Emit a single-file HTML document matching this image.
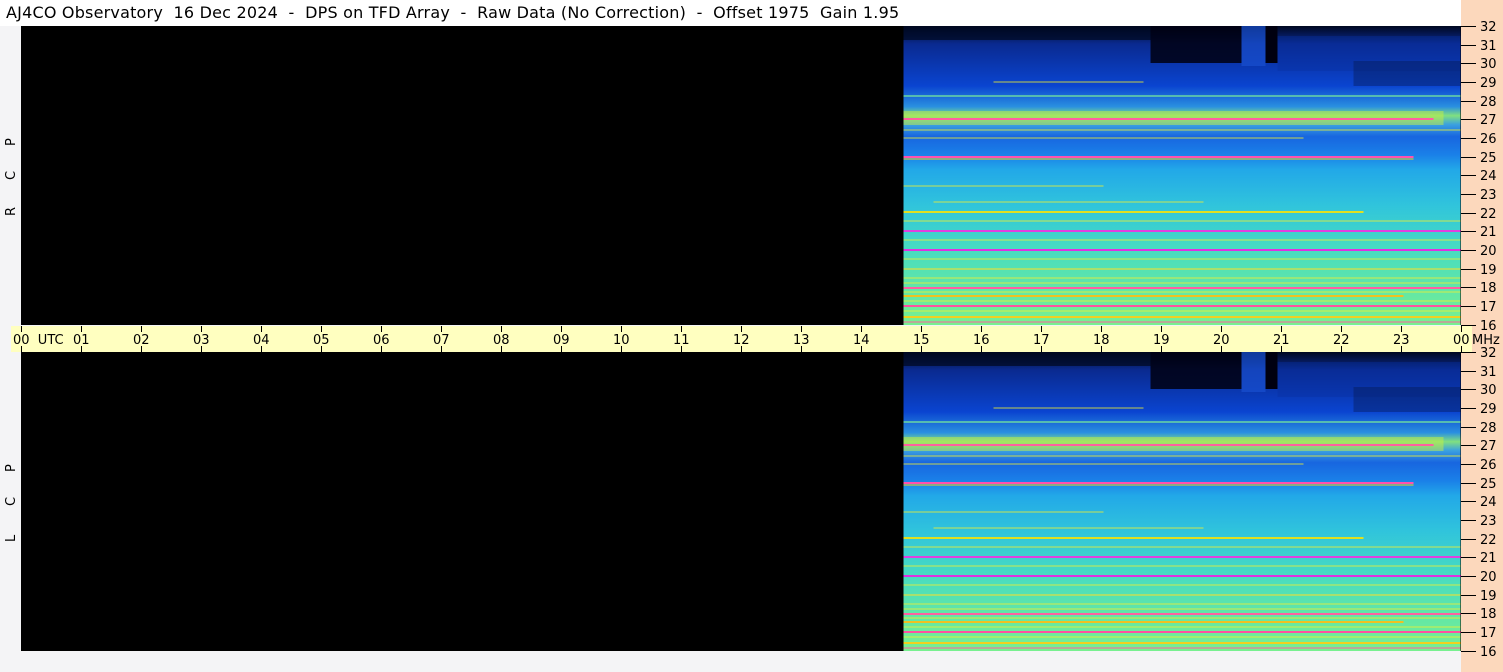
<!DOCTYPE html>
<html><head><meta charset="utf-8"><style>
html,body{margin:0;padding:0}
body{width:1503px;height:672px;position:relative;background:#f4f4f6;overflow:hidden;font-family:"DejaVu Sans",sans-serif}
.title{position:absolute;left:0;top:0;width:1461px;height:26px;background:#fff;font-size:16px;letter-spacing:0.2px;line-height:26px;padding-left:6px;box-sizing:border-box;color:#000;white-space:pre}
.right{position:absolute;left:1461px;top:0;width:42px;height:672px;background:#fcd8bc}
.panel{position:absolute;left:21px;width:1440px;height:299px;background:#000}
.bar{position:absolute;left:11px;top:326px;width:1461px;height:26px;background:#ffffc0}
</style></head><body>
<div class="title">AJ4CO Observatory  16 Dec 2024  -  DPS on TFD Array  -  Raw Data (No Correction)  -  Offset 1975  Gain 1.95</div>
<div class="right"></div>
<svg width="0" height="0" style="position:absolute">
<defs>
<linearGradient id="bg" x1="0" y1="0" x2="0" y2="1">
<stop offset="0" stop-color="#000820"/><stop offset="0.06" stop-color="#0a2a90"/>
<stop offset="0.2" stop-color="#0a44d0"/><stop offset="0.27" stop-color="#2a90e0"/>
<stop offset="0.3" stop-color="#80e080"/><stop offset="0.33" stop-color="#3aa0e0"/>
<stop offset="0.37" stop-color="#1866e0"/><stop offset="0.43" stop-color="#1a80e8"/>
<stop offset="0.48" stop-color="#22a8e8"/><stop offset="0.6" stop-color="#30c4dc"/>
<stop offset="0.75" stop-color="#48dcc0"/><stop offset="1" stop-color="#78f090"/>
</linearGradient>
<symbol id="spec" viewBox="0 0 557 299">
<rect width="557" height="299" fill="url(#bg)"/>
<rect x="247" y="0" width="91" height="37" fill="#000010" opacity="0.85"/>
<rect x="362" y="0" width="12" height="37" fill="#000010"/>
<rect x="338" y="0" width="24" height="40" fill="#1850d0" opacity="0.7"/>
<rect x="374" y="10" width="183" height="35" fill="#0830a0" opacity="0.4"/>
<rect x="450" y="35" width="107" height="25" fill="#041850" opacity="0.4"/>
<rect x="0" y="0" width="247" height="14" fill="#000820" opacity="0.7"/>
<rect x="0" y="85" width="540" height="14" fill="#c8f040" opacity="0.5"/>
<g stroke-width="2">
<line x1="0" y1="93" x2="530" y2="93" stroke="#ff60a0"/>
<line x1="0" y1="70" x2="557" y2="70" stroke="#70e0a0" opacity="0.7"/>
<line x1="0" y1="131" x2="510" y2="131" stroke="#ff50b0"/>
<line x1="0" y1="133" x2="510" y2="133" stroke="#f0d020" stroke-width="1"/>
<line x1="0" y1="186" x2="460" y2="186" stroke="#e0e020"/>
<line x1="0" y1="205" x2="557" y2="205" stroke="#e040e0"/>
<line x1="0" y1="224" x2="557" y2="224" stroke="#e030e0"/>
<line x1="0" y1="243" x2="557" y2="243" stroke="#e0e040" opacity="0.6"/>
<line x1="0" y1="262" x2="557" y2="262" stroke="#ff60a0"/>
<line x1="0" y1="270" x2="500" y2="270" stroke="#f0c020"/>
<line x1="0" y1="280" x2="557" y2="280" stroke="#ff50a0"/>
<line x1="0" y1="291" x2="557" y2="291" stroke="#f0d020"/>
<line x1="0" y1="296" x2="557" y2="296" stroke="#ff60a0" stroke-width="1"/>
</g>
<g stroke="#f0f030" stroke-width="1" opacity="0.8">
<line x1="0" y1="104" x2="557" y2="104"/><line x1="0" y1="112" x2="400" y2="112"/>
<line x1="0" y1="160" x2="200" y2="160"/><line x1="30" y1="176" x2="300" y2="176"/>
<line x1="0" y1="195" x2="557" y2="195"/><line x1="0" y1="214" x2="557" y2="214"/>
<line x1="0" y1="233" x2="557" y2="233"/><line x1="0" y1="252" x2="557" y2="252"/>
<line x1="0" y1="257" x2="557" y2="257"/><line x1="0" y1="266" x2="557" y2="266"/>
<line x1="0" y1="275" x2="557" y2="275"/><line x1="0" y1="285" x2="557" y2="285"/>
<line x1="90" y1="56" x2="240" y2="56"/>
</g>
</symbol>
</defs></svg>
<div class="panel" style="top:26px"><svg style="position:absolute;left:882px;top:0" width="558" height="299"><use href="#spec" width="558" height="299"/></svg></div>
<div class="panel" style="top:352px"><svg style="position:absolute;left:882px;top:0" width="558" height="299"><use href="#spec" width="558" height="299"/></svg></div>
<div class="bar"></div>
<svg style="position:absolute;left:0;top:0" width="1503" height="672">
<g stroke="#000" stroke-width="1">
<path d="M21.5 326v6M21.5 346v6M81.5 326v6M81.5 346v6M141.5 326v6M141.5 346v6M201.5 326v6M201.5 346v6M261.5 326v6M261.5 346v6M321.5 326v6M321.5 346v6M381.5 326v6M381.5 346v6M441.5 326v6M441.5 346v6M501.5 326v6M501.5 346v6M561.5 326v6M561.5 346v6M621.5 326v6M621.5 346v6M681.5 326v6M681.5 346v6M741.5 326v6M741.5 346v6M801.5 326v6M801.5 346v6M861.5 326v6M861.5 346v6M921.5 326v6M921.5 346v6M981.5 326v6M981.5 346v6M1041.5 326v6M1041.5 346v6M1101.5 326v6M1101.5 346v6M1161.5 326v6M1161.5 346v6M1221.5 326v6M1221.5 346v6M1281.5 326v6M1281.5 346v6M1341.5 326v6M1341.5 346v6M1401.5 326v6M1401.5 346v6M1461.5 326v6M1461.5 346v6"/>
</g>
<g stroke="#000" stroke-width="1" id="ft">
<path d="M1461 26.5h15M1461 45.5h15M1461 63.5h15M1461 82.5h15M1461 101.5h15M1461 119.5h15M1461 138.5h15M1461 157.5h15M1461 175.5h15M1461 194.5h15M1461 213.5h15M1461 231.5h15M1461 250.5h15M1461 269.5h15M1461 287.5h15M1461 306.5h15M1461 325.5h15"/>
</g>
<use href="#ft" y="326"/>
<g font-family="DejaVu Sans, sans-serif" font-size="13" fill="#000">
<text x="1480" y="31">32</text><text x="1480" y="50">31</text><text x="1480" y="68">30</text><text x="1480" y="87">29</text><text x="1480" y="106">28</text><text x="1480" y="124">27</text><text x="1480" y="143">26</text><text x="1480" y="162">25</text><text x="1480" y="180">24</text><text x="1480" y="199">23</text><text x="1480" y="218">22</text><text x="1480" y="236">21</text><text x="1480" y="255">20</text><text x="1480" y="274">19</text><text x="1480" y="292">18</text><text x="1480" y="311">17</text><text x="1480" y="330">16</text>
<text x="1480" y="357">32</text><text x="1480" y="376">31</text><text x="1480" y="394">30</text><text x="1480" y="413">29</text><text x="1480" y="432">28</text><text x="1480" y="450">27</text><text x="1480" y="469">26</text><text x="1480" y="488">25</text><text x="1480" y="506">24</text><text x="1480" y="525">23</text><text x="1480" y="544">22</text><text x="1480" y="562">21</text><text x="1480" y="581">20</text><text x="1480" y="600">19</text><text x="1480" y="618">18</text><text x="1480" y="637">17</text><text x="1480" y="656">16</text>
<text x="13" y="344" xml:space="preserve">00  UTC</text>
<text x="73" y="344">01</text><text x="133" y="344">02</text><text x="193" y="344">03</text><text x="253" y="344">04</text><text x="313" y="344">05</text><text x="373" y="344">06</text><text x="433" y="344">07</text><text x="493" y="344">08</text><text x="553" y="344">09</text><text x="613" y="344">10</text><text x="673" y="344">11</text><text x="733" y="344">12</text><text x="793" y="344">13</text><text x="853" y="344">14</text><text x="913" y="344">15</text><text x="973" y="344">16</text><text x="1033" y="344">17</text><text x="1093" y="344">18</text><text x="1153" y="344">19</text><text x="1213" y="344">20</text><text x="1273" y="344">21</text><text x="1333" y="344">22</text><text x="1393" y="344">23</text><text x="1453" y="344">00</text><text x="1472" y="344">MHz</text>
<text transform="translate(15,216) rotate(-90)">R</text>
<text transform="translate(15,180) rotate(-90)">C</text>
<text transform="translate(15,146) rotate(-90)">P</text>
<text transform="translate(15,542) rotate(-90)">L</text>
<text transform="translate(15,506) rotate(-90)">C</text>
<text transform="translate(15,472) rotate(-90)">P</text>
</g>
</svg>
</body></html>
